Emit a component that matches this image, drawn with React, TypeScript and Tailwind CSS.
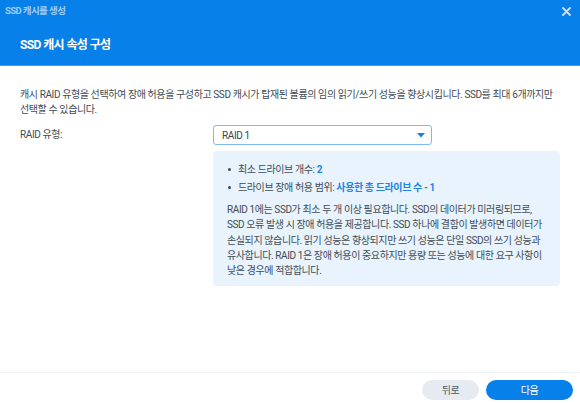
import React from "react";

export default function App() {
  const font = { fontFamily: 'Roboto, "Noto Sans CJK KR", sans-serif' };
  return (
    <div className="w-[580px] h-[403px] bg-white flex flex-col overflow-hidden" style={font}>
      <div className="h-[66px] bg-[#0880e9] border-b border-[#3d9cf0] flex flex-col shrink-0">
        <div className="h-[22px] flex items-center justify-between pl-[5px] pr-[9px]">
          <span className="text-[9.5px] font-bold text-[#9fcdf6] leading-none tracking-[-0.6px]">SSD 캐시를 생성</span>
          <svg width="9" height="9" viewBox="0 0 9 9" className="text-[#c9e3fb]">
            <path d="M1 1L8 8M8 1L1 8" stroke="currentColor" strokeWidth="1.8" strokeLinecap="round" />
          </svg>
        </div>
        <div className="pl-[20px] pt-[10px]">
          <span className="text-[12px] font-bold text-white leading-none tracking-[-0.6px]">SSD 캐시 속성 구성</span>
        </div>
      </div>
      <div className="flex-1 flex flex-col px-[20px] pt-[21px] text-[#414b55] tracking-[-0.4px]">
        <p className="text-[10px] leading-[15px] break-keep">
          캐시 RAID 유형을 선택하여 장애 허용을 구성하고 SSD 캐시가 탑재된 볼륨의 임의 읽기/쓰기 성능을 향상시킵니다. SSD를 최대 6개까지만 선택할 수 있습니다.
        </p>
        <div className="flex mt-[8px]">
          <div className="w-[194px] text-[10px] leading-[20px]">RAID 유형:</div>
          <div className="flex flex-col">
            <div className="w-[219px] h-[20px] border border-[#7fbaf2] rounded-[3px] flex items-center justify-between pl-[8px] pr-[6px]">
              <span className="text-[10px] text-[#3a4550]">RAID 1</span>
              <svg width="8" height="5" viewBox="0 0 8 5">
                <path d="M0 0H8L4 4.5Z" fill="#1a80e0" />
              </svg>
            </div>
            <div className="mt-[6px] w-[347px] bg-[#e8f3fd] rounded-[4px] pl-[14px] pr-[12px] pt-[11px] pb-[8px] text-[10px]">
              <ul className="flex flex-col gap-[3px]">
                <li className="leading-[15px]">
                  <span className="inline-block align-middle w-[3px] h-[3px] rounded-full bg-[#414b55] mr-[7px] ml-[1px] mb-[2px]" />
                  최소 드라이브 개수: <span className="font-bold text-[#1a86e6]">2</span>
                </li>
                <li className="leading-[15px]">
                  <span className="inline-block align-middle w-[3px] h-[3px] rounded-full bg-[#414b55] mr-[7px] ml-[1px] mb-[2px]" />
                  드라이브 장애 허용 범위: <span className="font-bold text-[#1a86e6]">사용한 총 드라이브 수 - 1</span>
                </li>
              </ul>
              <p className="mt-[7px] leading-[15.25px] break-keep">
                RAID 1에는 SSD가 최소 두 개 이상 필요합니다. SSD의 데이터가 미러링되므로, SSD 오류 발생 시 장애 허용을 제공합니다. SSD 하나에 결함이 발생하면 데이터가 손실되지 않습니다. 읽기 성능은 향상되지만 쓰기 성능은 단일 SSD의 쓰기 성능과 유사합니다. RAID 1은 장애 허용이 중요하지만 용량 또는 성능에 대한 요구 사항이 낮은 경우에 적합합니다.
              </p>
            </div>
          </div>
        </div>
      </div>
      <div className="h-[31px] border-t border-[#edf0f4] flex items-start justify-end gap-[7px] pt-[7px] pr-[7px] shrink-0 tracking-[-0.4px]">
        <button className="w-[57px] h-[20px] rounded-full bg-[#e6ebf2] text-[10px] text-[#4a5560]">뒤로</button>
        <button className="w-[87px] h-[20px] rounded-full bg-[#0880e9] text-[10px] text-white">다음</button>
      </div>
    </div>
  );
}
